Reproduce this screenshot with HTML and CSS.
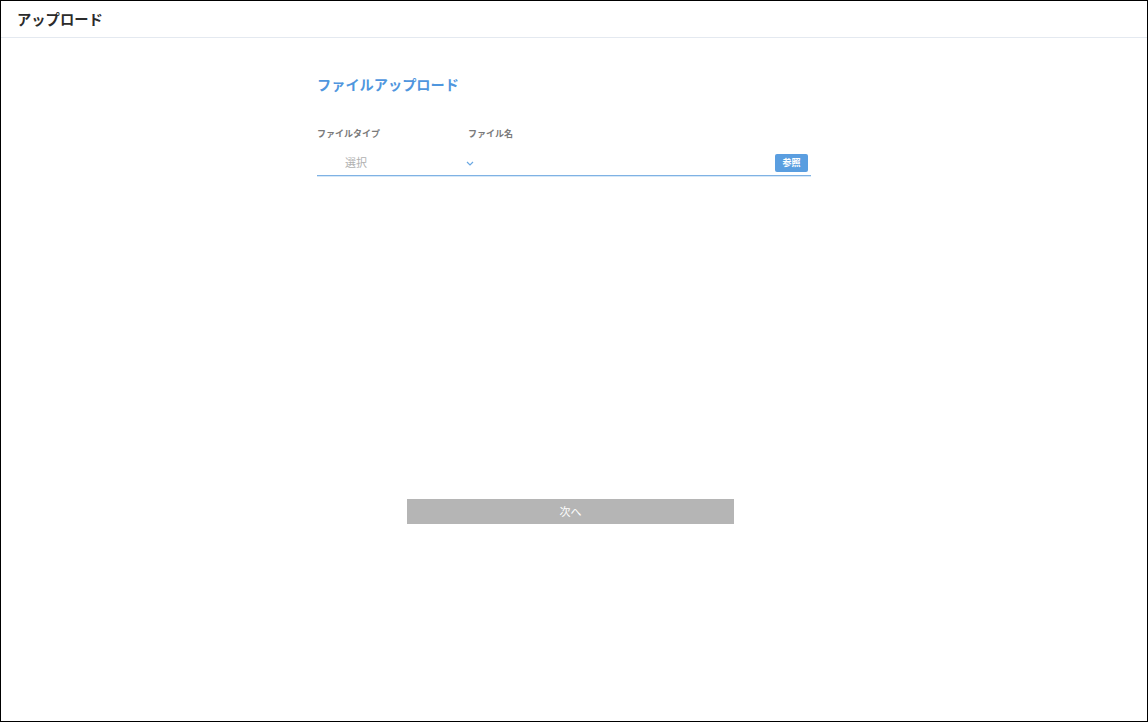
FILE: index.html
```html
<!DOCTYPE html>
<html lang="ja">
<head>
<meta charset="utf-8">
<title>アップロード</title>
<link rel="stylesheet" href="styles.css">
</head>
<body>
<div class="frame">
  <header class="topbar">
    <h1 class="topbar-title">アップロード</h1>
  </header>
  <main class="content">
    <section class="upload">
      <h2 class="upload-title">ファイルアップロード</h2>
      <div class="labels">
        <span class="label label-type">ファイルタイプ</span>
        <span class="label">ファイル名</span>
      </div>
      <div class="inputs">
        <div class="select">
          <span class="select-text">選択</span>
          <svg class="chevron" width="8" height="5" viewBox="0 0 8 5"><path d="M1 1l3 3L7 1" fill="none" stroke="#6aa8e2" stroke-width="1.2"/></svg>
        </div>
        <div class="filename"></div>
        <button class="browse">参照</button>
      </div>
    </section>
    <div class="actions">
      <button class="next">次へ</button>
    </div>
  </main>
</div>
</body>
</html>
```
FILE: styles.css
```css
* { box-sizing: border-box; }
html, body { margin: 0; padding: 0; }
body {
  font-family: "Noto Sans CJK JP", "Noto Sans", sans-serif;
  background: #fff;
}
.frame {
  width: 1148px;
  height: 722px;
  border: 1px solid #000;
  display: flex;
  flex-direction: column;
}
.topbar {
  height: 37px;
  border-bottom: 1px solid #e4e9f0;
  display: flex;
  align-items: center;
  padding-left: 16px;
}
.topbar-title {
  margin: 0;
  font-size: 14.3px;
  font-weight: 700;
  color: #2b2b2b;
  line-height: 1;
}
.content {
  flex: 1;
  display: flex;
  flex-direction: column;
}
.upload {
  margin-left: 316px;
  width: 494px;
  padding-top: 36px;
}
.upload-title {
  margin: 0;
  font-size: 14.2px;
  font-weight: 700;
  color: #4f96de;
  line-height: 20px;
}
.labels {
  display: flex;
  margin-top: 32px;
  height: 14px;
  align-items: center;
}
.label {
  font-size: 9px;
  font-weight: 700;
  color: #7a7a7a;
  line-height: 1;
}
.label-type { width: 151px; }
.inputs {
  display: flex;
  align-items: center;
  margin-top: 11px;
  height: 25px;
  border-bottom: 1px solid #7fb2e4;
  box-shadow: 0 1px 0 #d6e8f8;
}
.select {
  width: 158px;
  display: flex;
  align-items: center;
  padding-left: 28px;
  height: 100%;
}
.select-text {
  font-size: 11px;
  color: #b0b0b0;
  flex: 1;
  padding-bottom: 2px;
}
.chevron { margin-right: 1px; }
.filename { flex: 1; }
.browse {
  width: 33px;
  height: 18px;
  margin-right: 3px;
  margin-bottom: 1px;
  border: none;
  border-radius: 2px;
  background: #5a9ee0;
  color: #fff;
  font-family: inherit;
  font-size: 9px;
  font-weight: 700;
  padding: 0;
  line-height: 18px;
}
.actions {
  margin-top: 321px;
  padding-left: 406px;
}
.next {
  width: 327px;
  height: 25px;
  border: none;
  background: #b5b5b5;
  color: #fff;
  font-family: inherit;
  font-size: 11px;
  padding: 0;
}
```
